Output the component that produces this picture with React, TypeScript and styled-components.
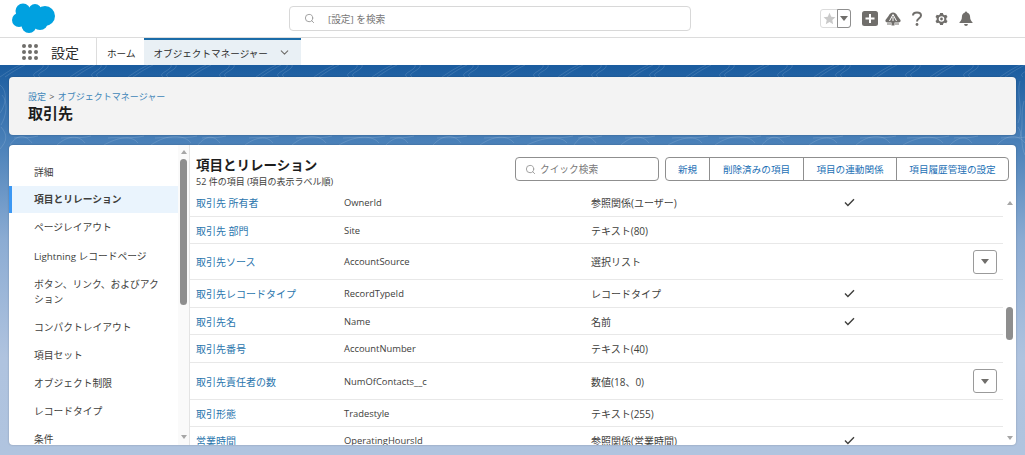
import React from 'react';
import styled, { createGlobalStyle } from 'styled-components';
import { ChevronDown, Search } from 'lucide-react';

const GlobalStyle = createGlobalStyle`
  html, body {
    margin: 0;
    padding: 0;
    height: 100%;
    overflow: hidden;
    background: #fff;
    font-family: "Open Sans", "Noto Sans CJK JP", sans-serif;
  }
  * { box-sizing: border-box; }
`;

const Page = styled.div`
  width: 1025px;
  height: 455px;
  display: flex;
  flex-direction: column;
  overflow: hidden;
`;

const Header = styled.header`
  height: 38px;
  flex: none;
  background: #fff;
  border-bottom: 1px solid #dcdcdc;
  display: grid;
  grid-template-columns: 289px 402px 1fr;
  align-items: center;
`;

const LogoWrap = styled.div`
  padding-left: 12px;
  display: flex;
  align-items: center;
`;

const GlobalSearch = styled.div`
  height: 25px;
  border: 1px solid #d8d8d8;
  border-radius: 4px;
  display: flex;
  align-items: center;
  gap: 13px;
  padding-left: 14px;
  color: #777;
  font-size: 9.7px;
`;

const HeaderTools = styled.div`
  display: flex;
  align-items: center;
  padding-left: 129px;
  color: #706e6b;
`;

const Favorites = styled.div`
  width: 31px;
  height: 19px;
  display: flex;
  border: 1px solid #dcdcdc;
  border-radius: 3px;
  margin-right: 11px;
`;

const FavStar = styled.div`
  width: 17px;
  display: flex;
  align-items: center;
  justify-content: center;
`;

const FavCaret = styled.div`
  flex: 1;
  border: 1px solid #8f8f8f;
  border-radius: 0 3px 3px 0;
  margin: -1px;
  display: flex;
  align-items: center;
  justify-content: center;
`;

const ToolIcon = styled.div<{ $w: number; $mr: number }>`
  width: ${(p) => p.$w}px;
  height: 16px;
  margin-right: ${(p) => p.$mr}px;
  display: flex;
  align-items: center;
  justify-content: center;
`;

const NavBar = styled.nav`
  height: 27px;
  flex: none;
  background: #fff;
  display: flex;
  align-items: stretch;
`;

const AppName = styled.div`
  width: 97px;
  display: flex;
  align-items: center;
  gap: 13px;
  padding-left: 22px;
  border-right: 1px solid #dddddd;
  font-size: 14px;
  color: #2b2b2b;
`;

const Waffle = styled.div`
  display: grid;
  grid-template-columns: repeat(3, 4px);
  gap: 2px;
`;

const Dot = styled.span`
  width: 4px;
  height: 4px;
  border-radius: 50%;
  background: #706e6b;
`;

const NavTab = styled.div<{ $active?: boolean }>`
  display: flex;
  align-items: center;
  font-size: 9.6px;
  color: #2b2b2b;
  padding: 0 ${(p) => (p.$active ? 10 : 8)}px 0 10px;
  gap: 10px;
  background: ${(p) => (p.$active ? '#e9f0f5' : '#fff')};
  border-top: 2px solid ${(p) => (p.$active ? '#1b6ca8' : 'transparent')};
`;

const Body = styled.main`
  position: relative;
  flex: 1;
  min-height: 0;
  padding: 12px 9px 10px;
  display: flex;
  flex-direction: column;
  gap: 10px;
  background: linear-gradient(180deg, #1a5c9f 0%, #4f84bb 22%, #8cacd3 45%, #afc3df 75%, #b0c4df 100%);
`;

const Contours = styled.svg`
  position: absolute;
  inset: 0;
  width: 100%;
  height: 100%;
  pointer-events: none;
`;

const TitleCard = styled.section`
  position: relative;
  height: 58px;
  flex: none;
  background: #f3f3f3;
  border-radius: 4px;
  box-shadow: 0 0 2px rgba(0, 0, 0, 0.25);
  padding: 13px 19px;
`;

const Crumbs = styled.div`
  font-size: 9px;
  line-height: 14px;
  color: #555;
`;

const Crumb = styled.a`
  color: #3f86b8;
`;

const CrumbSep = styled.span`
  margin: 0 1px;
`;

const PageTitle = styled.h1`
  margin: -1px 0 0;
  font-size: 15px;
  line-height: 20px;
  font-weight: 700;
  color: #1d1d1d;
`;

const MainCard = styled.section`
  position: relative;
  flex: 1;
  min-height: 0;
  background: #fff;
  border-radius: 4px;
  box-shadow: 0 0 2px rgba(0, 0, 0, 0.25);
  display: flex;
  overflow: hidden;
`;

const Sidebar = styled.aside`
  width: 181px;
  flex: none;
  display: flex;
  border-right: 1px solid #e4e4e4;
`;

const SideList = styled.div`
  width: 169px;
  flex: none;
  overflow: hidden;
  padding-top: 14px;
`;

const SideItem = styled.div<{ $active?: boolean; $h: number }>`
  height: ${(p) => p.$h}px;
  display: flex;
  align-items: center;
  padding: 0 12px 0 ${(p) => (p.$active ? 22 : 25)}px;
  font-size: 9.75px;
  line-height: 15px;
  color: #3e3e3c;
  font-weight: ${(p) => (p.$active ? 700 : 400)};
  background: ${(p) => (p.$active ? '#eaf4fd' : 'transparent')};
  border-left: ${(p) => (p.$active ? '3px solid #3b97f3' : 'none')};
`;

const ScrollTrack = styled.div`
  flex: 1;
  display: flex;
  flex-direction: column;
  align-items: center;
  padding: 5px 0 6px;
  background: #fafafa;
`;

const Arrow = styled.div<{ $up?: boolean }>`
  flex: none;
  width: 0;
  height: 0;
  border-left: 3.5px solid transparent;
  border-right: 3.5px solid transparent;
  ${(p) => (p.$up ? 'border-bottom' : 'border-top')}: 4px solid #a6a6a6;
`;

const Thumb = styled.div<{ $top: number; $h: number }>`
  flex: none;
  width: 7px;
  height: ${(p) => p.$h}px;
  margin-top: ${(p) => p.$top}px;
  border-radius: 4px;
  background: #8e8e8e;
`;

const Spacer = styled.div`
  flex: 1;
`;

const Content = styled.div`
  flex: 1;
  min-width: 0;
  display: flex;
  flex-direction: column;
`;

const ContentHead = styled.div`
  height: 44px;
  flex: none;
  display: flex;
  justify-content: space-between;
  padding: 12px 7px 0 6px;
`;

const HeadTitle = styled.h2`
  margin: 0 0 2px;
  font-size: 13.5px;
  line-height: 17px;
  font-weight: 700;
  color: #1d1d1d;
`;

const HeadSub = styled.div`
  font-size: 9px;
  line-height: 11px;
  color: #3e3e3c;
`;

const HeadActions = styled.div`
  display: flex;
  gap: 6px;
  height: 24px;
`;

const QuickFind = styled.div`
  width: 144px;
  border: 1px solid #8f8f8f;
  border-radius: 4px;
  display: flex;
  align-items: center;
  gap: 4px;
  padding-left: 9px;
  font-size: 9.7px;
  color: #777;
`;

const ButtonGroup = styled.div`
  display: flex;
  border: 1px solid #8f8f8f;
  border-radius: 4px;
`;

const GroupButton = styled.div<{ $w: number }>`
  width: ${(p) => p.$w}px;
  display: flex;
  align-items: center;
  justify-content: center;
  font-size: 9.6px;
  color: #1b6fb5;
  & + & {
    border-left: 1px solid #8f8f8f;
  }
`;

const TableArea = styled.div`
  flex: 1;
  min-height: 0;
  display: flex;
`;

const Rows = styled.div`
  flex: 1;
  min-width: 0;
  overflow: hidden;
`;

const Row = styled.div<{ $h: number }>`
  height: ${(p) => p.$h}px;
  flex: none;
  display: grid;
  grid-template-columns: 148px 247px 240px 36px 1fr;
  align-items: center;
  padding: 0 6px;
  border-bottom: 1px solid #e8e8e8;
  font-size: 10px;
  color: #3e3e3c;
`;

const FieldLink = styled.a`
  color: #2a75ad;
`;

const ApiName = styled.span`
  font-size: 9.4px;
`;

const CheckCell = styled.div`
  display: flex;
  justify-content: center;
`;

const RowMenu = styled.div`
  width: 24px;
  height: 24px;
  justify-self: end;
  border: 1px solid #9a9a9a;
  border-radius: 3px;
  display: flex;
  align-items: center;
  justify-content: center;
`;

const MenuCaret = styled.span`
  width: 0;
  height: 0;
  border-left: 4px solid transparent;
  border-right: 4px solid transparent;
  border-top: 5px solid #706e6b;
`;

const TableScroll = styled.div`
  width: 13px;
  flex: none;
  display: flex;
  flex-direction: column;
  align-items: center;
  padding: 12px 0 5px;
`;

const SalesforceLogo = () => (
  <svg width="44" height="31" viewBox="0 0 44 31" aria-hidden="true">
    <g fill="#00a1e0">
      <circle cx="11" cy="8" r="7.5" />
      <circle cx="23" cy="7.5" r="6.5" />
      <circle cx="33" cy="13" r="10" />
      <circle cx="7" cy="17" r="7" />
      <circle cx="17" cy="22.500" r="7.5" />
      <circle cx="28" cy="19" r="8" />
      <rect x="8" y="6" width="24" height="16" />
    </g>
  </svg>
);

const Check = () => (
  <svg width="11" height="9" viewBox="0 0 11 9" aria-hidden="true">
    <path d="M1 4.600 L3.900 7.400 L10 1.200" fill="none" stroke="#3e3e3c" strokeWidth="1.400" />
  </svg>
);

// background topographic texture: small clusters of strokes in the gaps around the cards
const hatchTop = Array.from({ length: 34 }).map((_, i) => {
  const x = i * 31 + (i % 3) * 4;
  const bend = i % 2 === 0 ? 6 : -6;
  return `M${x} 12 C${x + bend} 8 ${x + 10} 5 ${x + 14 + bend} 0 M${x + 5} 12 C${x + 5 + bend} 8 ${x + 15} 5 ${x + 19 + bend} 0`;
});

const ringsMid = Array.from({ length: 22 }).map((_, i) => {
  const x = 10 + i * 47;
  const w = 16 + (i % 4) * 6;
  return `M${x} 80 C${x + w / 2} ${68 + (i % 3) * 2} ${x + w} 70 ${x + w + 6} 78 M${x + 4} 73 C${x + w / 2} 72 ${x + w} 74 ${x + w + 12} 71`;
});

const sideMarks = [
  'M0 20 C8 26 6 40 0 48',
  'M2 30 C8 36 7 50 1 60',
  'M1 62 C8 70 7 76 0 84',
  'M1020 16 C1016 30 1024 44 1018 58',
  'M1024 36 C1020 50 1024 62 1020 72',
  'M1018 62 C1024 70 1020 80 1025 90',
];

const sideItems = [
  { label: '詳細', h: 27 },
  { label: '項目とリレーション', h: 27, active: true },
  { label: 'ページレイアウト', h: 29 },
  { label: 'Lightning レコードページ', h: 28 },
  { label: 'ボタン、リンク、およびアクション', h: 43 },
  { label: 'コンパクトレイアウト', h: 28 },
  { label: '項目セット', h: 28 },
  { label: 'オブジェクト制限', h: 28 },
  { label: 'レコードタイプ', h: 28 },
  { label: '条件', h: 29 },
];

const fields = [
  { label: '取引先 所有者', api: 'OwnerId', type: '参照関係(ユーザー)', check: true, h: 28 },
  { label: '取引先 部門', api: 'Site', type: 'テキスト(80)', h: 27 },
  { label: '取引先ソース', api: 'AccountSource', type: '選択リスト', menu: true, h: 36 },
  { label: '取引先レコードタイプ', api: 'RecordTypeId', type: 'レコードタイプ', check: true, h: 28 },
  { label: '取引先名', api: 'Name', type: '名前', check: true, h: 27 },
  { label: '取引先番号', api: 'AccountNumber', type: 'テキスト(40)', h: 28 },
  { label: '取引先責任者の数', api: 'NumOfContacts__c', type: '数値(18、0)', menu: true, h: 37 },
  { label: '取引形態', api: 'Tradestyle', type: 'テキスト(255)', h: 27 },
  { label: '営業時間', api: 'OperatingHoursId', type: '参照関係(営業時間)', check: true, h: 27 },
];

const App: React.FC = () => (
  <Page>
    <GlobalStyle />
    <Header>
      <LogoWrap>
        <SalesforceLogo />
      </LogoWrap>
      <GlobalSearch>
        <Search size={11} color="#999" />
        <span>[設定] を検索</span>
      </GlobalSearch>
      <HeaderTools>
        <Favorites>
          <FavStar>
            <svg width="13" height="13" viewBox="0 0 24 24" aria-hidden="true">
              <path fill="#c9c9c9" d="M12 1.500l3.200 7.200 7.800.8-5.900 5.200 1.700 7.700L12 18.400l-6.800 4 1.700-7.700L1 9.500l7.800-.8z" />
            </svg>
          </FavStar>
          <FavCaret>
            <MenuCaret />
          </FavCaret>
        </Favorites>
        <ToolIcon $w={16} $mr={7}>
          <svg width="16" height="15" viewBox="0 0 16 15" aria-hidden="true">
            <rect width="16" height="15" rx="2.500" fill="#706e6b" />
            <path d="M8 3v9M3.500 7.500h9" stroke="#fff" strokeWidth="2" />
          </svg>
        </ToolIcon>
        <ToolIcon $w={16} $mr={11}>
          <svg width="16" height="14" viewBox="0 0 16 14" aria-hidden="true">
            <path fill="#706e6b" d="M8 0.500 C10 0.500 11.500 2 12.500 4 L15.500 8 C16 9.500 15 10.500 13.500 10.500 L9.500 10.500 L9.500 13.500 L6.500 13.500 L6.500 10.500 L2.500 10.500 C1 10.500 0 9.500 .5 8 L3.500 4 C4.500 2 6 .5 8 .5z" />
            <path d="M8 2.500 L4.500 9 M8 2.500 L11.500 9 M8 5 V9" stroke="#fff" strokeWidth="1" fill="none" />
            <path d="M2 12 H6 M10 12 H14" stroke="#706e6b" strokeWidth="1.200" />
          </svg>
        </ToolIcon>
        <ToolIcon $w={10} $mr={13}>
          <svg width="10" height="15" viewBox="0 0 10 15" aria-hidden="true">
            <path d="M1 4.500 C1 0.500 9 0.500 9 4.500 C9 7.500 5 7 5 10.500" fill="none" stroke="#706e6b" strokeWidth="2" />
            <circle cx="5" cy="13.500" r="1.400" fill="#706e6b" />
          </svg>
        </ToolIcon>
        <ToolIcon $w={13} $mr={11}>
          <svg width="14" height="14" viewBox="0 0 14 14" aria-hidden="true">
            <path fill="#706e6b" fillRule="evenodd" d="M5.500 0.500h3l.4 1.700 1.500.8 1.700-.6 1.400 2.400-1.300 1.200v2l1.300 1.200-1.400 2.400-1.700-.6-1.500.8-.4 1.700h-3l-.4-1.700-1.500-.8-1.700.6L.5 9.200l1.300-1.200V6L.5 4.800l1.400-2.400 1.700.6 1.500-.8zM7 4a3 3 0 1 0 0 6 3 3 0 0 0 0-6z" />
            <circle cx="7" cy="7" r="1.500" fill="#706e6b" />
          </svg>
        </ToolIcon>
        <ToolIcon $w={14} $mr={0}>
          <svg width="14" height="15" viewBox="0 0 14 15" aria-hidden="true">
            <path fill="#706e6b" d="M7 0.500 a1.100 1.100 0 0 1 1.100 1.100 c2.100.6 3 2.400 3 4.400 0 2.800 1 3.800 2.400 5.200 v.8 H.5 v-.8 C1.900 9.800 2.900 8.800 2.900 6 c0-2 .9-3.800 3-4.400 A1.100 1.100 0 0 1 7 .5z M5.100 13h3.800a1.900 1.900 0 0 1-3.800 0z" />
          </svg>
        </ToolIcon>
      </HeaderTools>
    </Header>
    <NavBar>
      <AppName>
        <Waffle>
          {Array.from({ length: 9 }).map((_, i) => (
            <Dot key={i} />
          ))}
        </Waffle>
        <span>設定</span>
      </AppName>
      <NavTab>ホーム</NavTab>
      <NavTab $active>
        オブジェクトマネージャー
        <ChevronDown size={13} color="#706e6b" />
      </NavTab>
    </NavBar>
    <Body>
      <Contours viewBox="0 0 1025 390" preserveAspectRatio="none" aria-hidden="true">
        <g fill="none" stroke="#fff" strokeOpacity="0.13" strokeWidth="1">
          {hatchTop.map((d) => (
            <path key={d} d={d} />
          ))}
          {ringsMid.map((d) => (
            <path key={d} d={d} />
          ))}
          {sideMarks.map((d) => (
            <path key={d} d={d} />
          ))}
        </g>
      </Contours>
      <TitleCard>
        <Crumbs>
          <Crumb>設定</Crumb> <CrumbSep>&gt;</CrumbSep> <Crumb>オブジェクトマネージャー</Crumb>
        </Crumbs>
        <PageTitle>取引先</PageTitle>
      </TitleCard>
      <MainCard>
        <Sidebar>
          <SideList>
            {sideItems.map((item) => (
              <SideItem key={item.label} $active={item.active} $h={item.h}>
                <span>{item.label}</span>
              </SideItem>
            ))}
          </SideList>
          <ScrollTrack>
            <Arrow $up />
            <Thumb $top={5} $h={146} />
            <Spacer />
            <Arrow />
          </ScrollTrack>
        </Sidebar>
        <Content>
          <ContentHead>
            <div>
              <HeadTitle>項目とリレーション</HeadTitle>
              <HeadSub>52 件の項目 (項目の表示ラベル順)</HeadSub>
            </div>
            <HeadActions>
              <QuickFind>
                <Search size={11} color="#999" />
                <span>クイック検索</span>
              </QuickFind>
              <ButtonGroup>
                <GroupButton $w={43}>新規</GroupButton>
                <GroupButton $w={94}>削除済みの項目</GroupButton>
                <GroupButton $w={93}>項目の連動関係</GroupButton>
                <GroupButton $w={112}>項目履歴管理の設定</GroupButton>
              </ButtonGroup>
            </HeadActions>
          </ContentHead>
          <TableArea>
            <Rows>
              {fields.map((f) => (
                <Row key={f.api} $h={f.h}>
                  <FieldLink>{f.label}</FieldLink>
                  <ApiName>{f.api}</ApiName>
                  <span>{f.type}</span>
                  <CheckCell>{f.check && <Check />}</CheckCell>
                  {f.menu ? (
                    <RowMenu>
                      <MenuCaret />
                    </RowMenu>
                  ) : (
                    <span />
                  )}
                </Row>
              ))}
            </Rows>
            <TableScroll>
              <Arrow $up />
              <Thumb $top={102} $h={33} />
              <Spacer />
              <Arrow />
            </TableScroll>
          </TableArea>
        </Content>
      </MainCard>
    </Body>
  </Page>
);

export default App;
